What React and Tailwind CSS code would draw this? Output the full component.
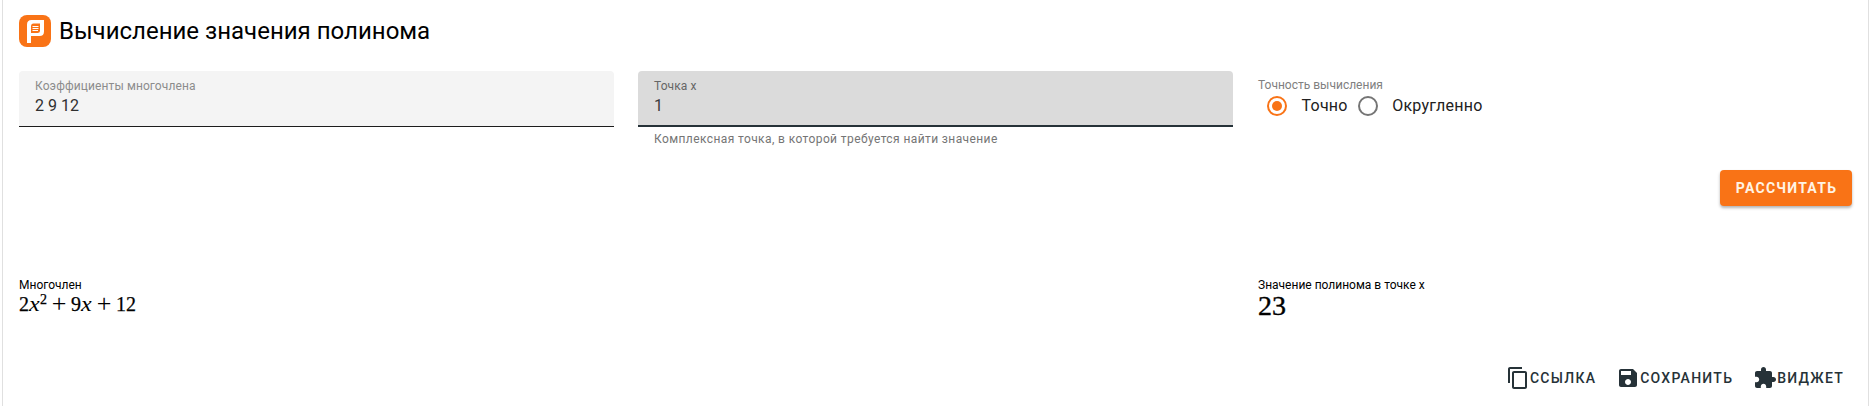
import React from "react";

const roboto = "font-['Roboto','Noto_Sans',sans-serif]";

function Logo() {
  return (
    <svg className="h-8 w-8 shrink-0" viewBox="0 0 32 32">
      <rect width="32" height="32" rx="8" fill="#f97316" />
      <path fill="#fff" fillRule="evenodd" d="M8 28V9.500Q8 5 12.500 5H25V16.500Q25 21 20.500 21H12V28ZM12 11.500V18H18.500Q21 18 21 16V8.500H14.500Q12 8.500 12 11.500Z" />
      <path stroke="#fff" strokeWidth="1" d="M13.500 11.500H19.500M13.500 13.500H19.500M13.500 15.500H19" />
    </svg>
  );
}

function Field({ label, value, active }) {
  return (
    <div
      className={
        "flex h-14 flex-col rounded-t px-4 pt-2 " +
        (active ? "border-b-2 border-[#263238] bg-[#dbdbdb]" : "border-b border-[#1d1d1d] bg-[#f4f4f4]")
      }
    >
      <span className={"text-[12px] leading-[15px] tracking-[0.1px] " + (active ? "text-[#666]" : "text-[#8c8c8c]")}>{label}</span>
      <span className={"mt-0.5 text-[16px] leading-5 " + (active ? "text-[#3b3b3b]" : "text-[#303030]")}>{value}</span>
    </div>
  );
}

function Radio({ checked, label }) {
  return (
    <div className="flex items-center">
      <svg className="mx-2.5 h-5 w-5" viewBox="0 0 20 20">
        <circle cx="10" cy="10" r="9" fill="none" strokeWidth="2" stroke={checked ? "#f97316" : "#757575"} />
        {checked && <circle cx="10" cy="10" r="5" fill="#f97316" />}
      </svg>
      <span className="pl-[4.500px] text-[16px] leading-6 tracking-[0.25px] text-[#212121]">{label}</span>
    </div>
  );
}

function Action({ path, label }) {
  return (
    <div className="flex h-9 items-center">
      <svg className="h-6 w-6" viewBox="0 0 24 24" fill="#263238">
        <path d={path} />
      </svg>
      <span className="text-[14px] font-medium leading-none tracking-[1.25px] text-[#263238]">{label}</span>
    </div>
  );
}

function Plus() {
  return <span className="relative top-px w-6 text-center text-[26px] leading-6 [-webkit-text-stroke:0]">+</span>;
}

function Variable() {
  return <i className="w-[11px] origin-left scale-x-[1.2] [-webkit-text-stroke:0]">x</i>;
}

const COPY = "M16 1H4c-1.100 0-2 .9-2 2v14h2V3h12V1zm3 4H8c-1.100 0-2 .9-2 2v14c0 1.100.9 2 2 2h11c1.100 0 2-.9 2-2V7c0-1.100-.9-2-2-2zm0 16H8V7h11v14z";
const SAVE = "M17 3H5c-1.110 0-2 .9-2 2v14c0 1.100.89 2 2 2h14c1.100 0 2-.9 2-2V7l-4-4zm-5 16c-1.660 0-3-1.340-3-3s1.340-3 3-3 3 1.340 3 3-1.340 3-3 3zm3-10H5V5h10v4z";
const WIDGET = "M20.500 11H19V7c0-1.100-.9-2-2-2h-4V3.500C13 2.120 11.880 1 10.500 1S8 2.120 8 3.500V5H4c-1.100 0-1.990.9-1.990 2v3.800H3.500c1.490 0 2.700 1.210 2.700 2.700s-1.210 2.700-2.700 2.700H2V20c0 1.100.9 2 2 2h3.800v-1.500c0-1.490 1.210-2.700 2.700-2.700s2.700 1.210 2.700 2.700V22H17c1.100 0 2-.9 2-2v-4h1.500c1.380 0 2.500-1.120 2.500-2.500S21.880 11 20.500 11z";

export default function App() {
  return (
    <div className={"h-[406px] w-full overflow-hidden bg-white pl-[2px] " + roboto}>
      <div className="flex h-full flex-col border-x border-[#e0e0e0] bg-white px-4 pt-[15px]">
        <header className="flex h-8 items-center gap-2">
          <Logo />
          <h1 className="text-[24px] leading-8 text-black">Вычисление значения полинома</h1>
        </header>

        <div className="mt-6 grid h-[99px] grid-cols-3 gap-6">
          <Field label="Коэффициенты многочлена" value="2 9 12" />
          <div>
            <Field label="Точка x" value="1" active />
            <p className="px-4 pt-1 text-[12px] leading-4 tracking-[0.4px] text-[#757575]">
              Комплексная точка, в которой требуется найти значение
            </p>
          </div>
          <div className="pt-1.5">
            <p className="pl-px text-[12px] leading-4 text-[#808080]">Точность вычисления</p>
            <div className="flex pt-px">
              <Radio checked label="Точно" />
              <Radio label="Округленно" />
            </div>
          </div>
        </div>

        <div className="flex h-9 justify-end">
          <button className="h-9 w-[132px] rounded bg-[#f97316] pl-px text-[14px] font-bold tracking-[1.25px] text-[#fff3e4] shadow-[0_2px_3px_rgba(0,0,0,0.3)]">
            РАССЧИТАТЬ
          </button>
        </div>

        <div className="mt-[71px] grid h-[83px] grid-cols-3 gap-6 text-black">
          <div className="col-span-2">
            <p className="text-[12px] leading-4">Многочлен</p>
            <div className="-mt-0.5 flex items-baseline font-['Liberation_Serif',serif] text-[20px] leading-6 [-webkit-text-stroke:0.25px_black]">
              <span>2</span><Variable /><sup className="relative -top-[7px] text-[14px] leading-none">2</sup>
              <Plus /><span>9</span><Variable /><Plus /><span>12</span>
            </div>
          </div>
          <div>
            <p className="pl-px text-[12px] leading-4">Значение полинома в точке x</p>
            <p className="-mt-px pl-px font-['Liberation_Serif',serif] text-[28px] leading-7 [-webkit-text-stroke:0.4px_black]">23</p>
          </div>
        </div>

        <footer className="flex justify-end gap-5 pr-2">
          <Action path={COPY} label="ССЫЛКА" />
          <Action path={SAVE} label="СОХРАНИТЬ" />
          <Action path={WIDGET} label="ВИДЖЕТ" />
        </footer>
      </div>
    </div>
  );
}
